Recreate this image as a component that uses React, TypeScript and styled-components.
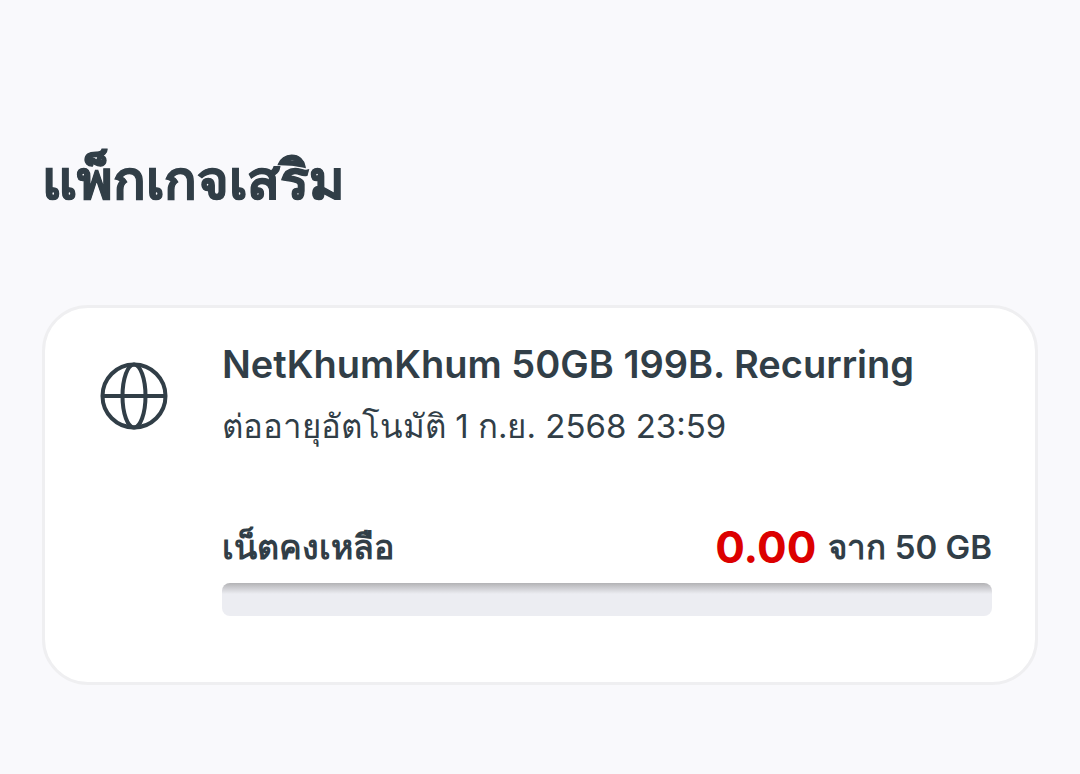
import styled, { createGlobalStyle } from 'styled-components';

const GlobalStyle = createGlobalStyle`
  * { box-sizing: border-box; }
  body {
    margin: 0;
    background: #f9f9fc;
    color: #313e47;
    font-family: Inter, 'Noto Sans', sans-serif;
  }
`;

const Page = styled.main`
  min-height: 100vh;
  padding: 144px 42px 88px;
`;

const Heading = styled.h1`
  margin: 0 0 89px;
  font-size: 54px;
  line-height: 72px;
  font-weight: 800;
  -webkit-text-stroke: 1px currentColor;
`;

const Card = styled.article`
  display: flex;
  gap: 52px;
  padding: 26px 43px 66px 53px;
  border: 3px solid #efeff1;
  border-radius: 46px;
  background: #fff;
`;

const GlobeIcon = styled.svg`
  flex: none;
  width: 72px;
  height: 72px;
  margin-top: 26px;
  fill: none;
  stroke: #313e47;
  stroke-width: 4;
`;

const Details = styled.div`
  flex: 1;
  min-width: 0;
`;

const PackageName = styled.h2`
  margin: 0;
  font-size: 38px;
  line-height: 60px;
  font-weight: 600;
`;

const Renewal = styled.p`
  margin: 0 0 60px;
  font-size: 33px;
  line-height: 64px;
`;

const Usage = styled.div`
  display: flex;
  align-items: center;
  justify-content: space-between;
  margin-bottom: 7px;
  font-size: 34px;
  line-height: 58px;
  font-weight: 600;
`;

const Amount = styled.div`
  display: flex;
  align-items: center;
  gap: 12px;
`;

const Remaining = styled.strong`
  color: #dc0000;
  font-size: 44px;
  font-weight: 700;
`;

const Quota = styled.span`
  font-size: 33px;
`;

const Track = styled.div`
  height: 33px;
  border-radius: 8px;
  background: linear-gradient(#b2b2b5, #c8c8cc 4px, #ecedf2 11px);
`;

export default function App() {
  return (
    <Page>
      <GlobalStyle />
      <Heading>แพ็กเกจเสริม</Heading>
      <Card>
        <GlobeIcon viewBox="0 0 72 72" aria-hidden="true">
          <circle cx="36" cy="36" r="31.5" />
          <ellipse cx="36" cy="36" rx="11.5" ry="31.5" />
          <path d="M4 36h64" />
        </GlobeIcon>
        <Details>
          <PackageName>NetKhumKhum 50GB 199B. Recurring</PackageName>
          <Renewal>ต่ออายุอัตโนมัติ 1 ก.ย. 2568 23:59</Renewal>
          <Usage>
            <span id="remaining-label">เน็ตคงเหลือ</span>
            <Amount>
              <Remaining>0.00</Remaining>
              <Quota>จาก 50 GB</Quota>
            </Amount>
          </Usage>
          <Track role="progressbar" aria-labelledby="remaining-label" aria-valuemin={0} aria-valuemax={50} aria-valuenow={0} />
        </Details>
      </Card>
    </Page>
  );
}
